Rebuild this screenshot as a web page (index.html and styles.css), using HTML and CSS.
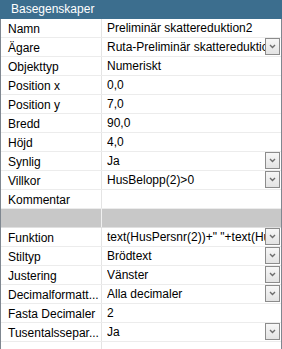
FILE: index.html
```html
<!DOCTYPE html>
<html lang="sv">
<head>
    <meta charset="UTF-8">
    <title>Basegenskaper</title>
    <link rel="stylesheet" href="styles.css">
</head>
<body>
    <div class="grid">
        <div class="grid-header">Basegenskaper</div>

        <div class="rows">
            <div class="row"><div class="name">Namn</div><div class="value"><span class="text">Preliminär skattereduktion2</span></div></div>
            <div class="row"><div class="name">Ägare</div><div class="value"><span class="text">Ruta-Preliminär skattereduktion2</span><span class="drop"><svg width="7" height="5" viewBox="0 0 7 5"><polyline points="1,1 3.5,3.5 6,1" fill="none" stroke="#6d6d6d" stroke-width="1.4"/></svg></span></div></div>
            <div class="row"><div class="name">Objekttyp</div><div class="value"><span class="text">Numeriskt</span></div></div>
            <div class="row"><div class="name">Position x</div><div class="value"><span class="text">0,0</span></div></div>
            <div class="row"><div class="name">Position y</div><div class="value"><span class="text">7,0</span></div></div>
            <div class="row"><div class="name">Bredd</div><div class="value"><span class="text">90,0</span></div></div>
            <div class="row"><div class="name">Höjd</div><div class="value"><span class="text">4,0</span></div></div>
            <div class="row"><div class="name">Synlig</div><div class="value"><span class="text">Ja</span><span class="drop"><svg width="7" height="5" viewBox="0 0 7 5"><polyline points="1,1 3.5,3.5 6,1" fill="none" stroke="#6d6d6d" stroke-width="1.4"/></svg></span></div></div>
            <div class="row"><div class="name">Villkor</div><div class="value"><span class="text">HusBelopp(2)&gt;0</span><span class="drop"><svg width="7" height="5" viewBox="0 0 7 5"><polyline points="1,1 3.5,3.5 6,1" fill="none" stroke="#6d6d6d" stroke-width="1.4"/></svg></span></div></div>
            <div class="row"><div class="name">Kommentar</div><div class="value"><span class="text"></span></div></div>
            <div class="row row-group"><div class="name"></div><div class="value"></div></div>
            <div class="row"><div class="name">Funktion</div><div class="value"><span class="text">text(HusPersnr(2))+" "+text(HusBelopp(2))</span><span class="drop"><svg width="7" height="5" viewBox="0 0 7 5"><polyline points="1,1 3.5,3.5 6,1" fill="none" stroke="#6d6d6d" stroke-width="1.4"/></svg></span></div></div>
            <div class="row"><div class="name">Stiltyp</div><div class="value"><span class="text">Brödtext</span><span class="drop"><svg width="7" height="5" viewBox="0 0 7 5"><polyline points="1,1 3.5,3.5 6,1" fill="none" stroke="#6d6d6d" stroke-width="1.4"/></svg></span></div></div>
            <div class="row"><div class="name">Justering</div><div class="value"><span class="text">Vänster</span><span class="drop"><svg width="7" height="5" viewBox="0 0 7 5"><polyline points="1,1 3.5,3.5 6,1" fill="none" stroke="#6d6d6d" stroke-width="1.4"/></svg></span></div></div>
            <div class="row"><div class="name">Decimalformatt...</div><div class="value"><span class="text">Alla decimaler</span><span class="drop"><svg width="7" height="5" viewBox="0 0 7 5"><polyline points="1,1 3.5,3.5 6,1" fill="none" stroke="#6d6d6d" stroke-width="1.4"/></svg></span></div></div>
            <div class="row"><div class="name">Fasta Decimaler</div><div class="value"><span class="text">2</span></div></div>
            <div class="row"><div class="name">Tusentalssepar...</div><div class="value"><span class="text">Ja</span><span class="drop"><svg width="7" height="5" viewBox="0 0 7 5"><polyline points="1,1 3.5,3.5 6,1" fill="none" stroke="#6d6d6d" stroke-width="1.4"/></svg></span></div></div>
            <div class="row"><div class="name"></div><div class="value"></div></div>
        </div>
    </div>
</body>
</html>
```

FILE: styles.css
```css
/* Property grid */
* {
    box-sizing: border-box;
}

body {
    margin: 0;
    background-color: #ffffff;
    font-family: "Liberation Sans", Arial, sans-serif;
    font-size: 12px;
    color: #000000;
}

.grid {
    width: 282px;
    height: 349px;
    overflow: hidden;
}

.grid-header {
    height: 19px;
    line-height: 19px;
    padding-left: 11px;
    background-color: #3c6e8e;
    color: #ffffff;
}

.rows {
    border-left: 1px solid #7f8790;
    border-right: 1px solid #7f8790;
}

.row {
    display: grid;
    grid-template-columns: 101px 1fr;
    height: 19px;
    border-bottom: 1px solid #ececec;
}

.name {
    padding: 1px 0 0 7px;
    line-height: 18px;
    border-right: 1px solid #e4e4e4;
    white-space: nowrap;
    overflow: hidden;
}

.value {
    display: flex;
    align-items: flex-start;
    min-width: 0;
    padding-left: 5px;
}

.text {
    flex: 1;
    min-width: 0;
    padding-top: 1px;
    line-height: 17px;
    white-space: nowrap;
    overflow: hidden;
}

.drop {
    flex: none;
    display: flex;
    align-items: center;
    justify-content: center;
    width: 15px;
    height: 17px;
    margin: 0 1px 0 0;
    border: 1px solid #8c8c8c;
    background: linear-gradient(#f7f7f7, #e3e3e3);
}

.row-group {
    background-color: #c8c8c8;
    border-bottom-color: #e0e0e0;
}

.row-group .name {
    border-right-color: #f0f0f0;
}
```
